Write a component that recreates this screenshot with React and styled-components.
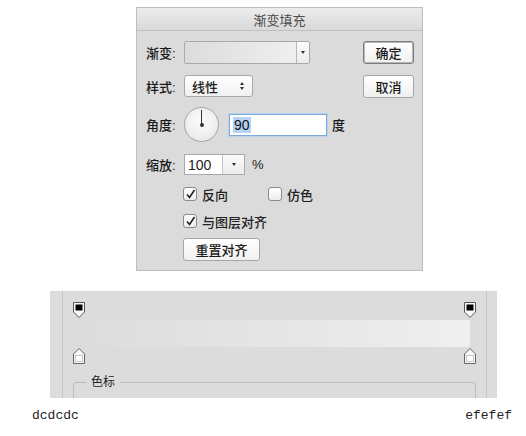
import React from "react";
import styled, { createGlobalStyle } from "styled-components";

const GlobalStyle = createGlobalStyle`
  html, body {
    margin: 0;
    padding: 0;
    background: #fff;
  }
  body {
    font-family: "Noto Sans CJK SC", "Liberation Sans", sans-serif;
    color: #222;
  }
`;

const CJK = `"Liberation Sans", "Noto Sans CJK SC", sans-serif`;

// 위쪽 다이얼로그
const Page = styled.div`
  width: 526px;
  height: 436px;
  overflow: hidden;
  display: flex;
  flex-direction: column;
`;

const Dialog = styled.div`
  box-sizing: border-box;
  width: 287px;
  height: 264px;
  margin: 7px 0 0 136px;
  border: 1px solid #bdbdbd;
  background: #dbdbdb;
  display: flex;
  flex-direction: column;
`;

const TitleBar = styled.div`
  height: 22px;
  border-bottom: 1px solid #c2c2c2;
  background: linear-gradient(#ececec, #d9d9d9);
  display: flex;
  align-items: center;
  justify-content: center;
  font-size: 13px;
  color: #4a4a4a;
  font-family: ${CJK};
`;

const Body = styled.div`
  display: grid;
  grid-template-columns: 1fr 51px;
  padding: 0 8px 0 9px;
`;

const Main = styled.div`
  display: flex;
  flex-direction: column;
`;

const Row = styled.div`
  display: flex;
  align-items: center;
  height: ${(p) => p.h}px;
  margin-top: ${(p) => p.mt}px;
  padding-left: ${(p) => p.indent || 0}px;
`;

const Label = styled.span`
  width: 38px;
  flex: none;
  font-size: 13px;
  font-weight: 500;
  font-family: ${CJK};
  color: #1a1a1a;
`;

const Text = styled.span`
  font-size: 13px;
  font-weight: 500;
  font-family: ${CJK};
  color: #1a1a1a;
  margin-left: ${(p) => p.ml || 0}px;
`;

const GradientPick = styled.div`
  box-sizing: border-box;
  width: 126px;
  height: 23px;
  border: 1px solid #a9a9a9;
  border-radius: 2px;
  display: flex;
  background: #fff;
`;

const GradientSwatch = styled.div`
  flex: 1;
  background: linear-gradient(90deg, #dcdcdc, #efefef);
  border-right: 1px solid #b5b5b5;
`;

const DropPart = styled.div`
  width: ${(p) => p.w}px;
  display: flex;
  align-items: center;
  justify-content: center;
  background: linear-gradient(#fbfbfb, #ececec);
`;

const Arrow = styled.span`
  width: 0;
  height: 0;
  border-left: 2.5px solid transparent;
  border-right: 2.5px solid transparent;
  border-top: ${(p) => (p.up ? "none" : "3px solid #333")};
  border-bottom: ${(p) => (p.up ? "3px solid #333" : "none")};
`;

const SelectBox = styled.div`
  box-sizing: border-box;
  width: 69px;
  height: 22px;
  border: 1px solid #a9a9a9;
  border-radius: 3px;
  background: linear-gradient(#ffffff, #f1f1f1);
  display: flex;
  align-items: center;
  justify-content: space-between;
  padding: 0 8px 0 7px;
  font-size: 13px;
  font-weight: 500;
  font-family: ${CJK};
`;

const Updown = styled.span`
  display: flex;
  flex-direction: column;
  gap: 2px;
`;

const Dial = styled.div`
  position: relative;
  box-sizing: border-box;
  width: 35px;
  height: 35px;
  border-radius: 50%;
  border: 1px solid #a4a4a4;
  background: radial-gradient(circle at 50% 40%, #fdfdfd, #e4e4e4);
  flex: none;
`;

const DialHand = styled.div`
  position: absolute;
  left: 16px;
  top: 2px;
  width: 1px;
  height: 15px;
  background: #333;
  &::after {
    content: "";
    position: absolute;
    left: -1.5px;
    bottom: -2px;
    width: 4px;
    height: 4px;
    border-radius: 50%;
    background: #333;
  }
`;

const AngleInput = styled.div`
  box-sizing: border-box;
  width: 98px;
  height: 22px;
  margin-left: 10px;
  border: 1px solid #7ea8d6;
  box-shadow: 0 0 0 1px #b9d2ee;
  background: #fff;
  display: flex;
  align-items: center;
  padding-left: 3px;
  font-family: "Liberation Sans", sans-serif;
  font-size: 14px;
  color: #111;
`;

const Selected = styled.span`
  background: #b5d3f7;
  padding: 0 1px;
`;

const ScaleInput = styled.div`
  box-sizing: border-box;
  width: 61px;
  height: 21px;
  border: 1px solid #a9a9a9;
  background: #fff;
  display: flex;
  font-family: "Liberation Sans", sans-serif;
  font-size: 14px;
`;

const ScaleValue = styled.div`
  flex: 1;
  display: flex;
  align-items: center;
  padding-left: 3px;
  border-right: 1px solid #c4c4c4;
`;

const Check = styled.span`
  box-sizing: border-box;
  width: 14px;
  height: 14px;
  border: 1px solid #8a8a8a;
  border-radius: 3px;
  background: linear-gradient(#ffffff, #ededed);
  display: flex;
  align-items: center;
  justify-content: center;
  flex: none;
`;

const CheckItem = styled.label`
  display: flex;
  align-items: center;
  gap: 5px;
  width: ${(p) => (p.w ? `${p.w}px` : "auto")};
  font-size: 13px;
  font-weight: 500;
  font-family: ${CJK};
`;

const Button = styled.div`
  box-sizing: border-box;
  width: ${(p) => p.w || 51}px;
  height: 23px;
  border: 1px solid ${(p) => (p.primary ? "#7d7d7d" : "#a6a6a6")};
  box-shadow: ${(p) => (p.primary ? "inset 0 0 0 1px #b8b8b8" : "none")};
  border-radius: 3px;
  background: linear-gradient(#ffffff, #f0f0f0);
  display: flex;
  align-items: center;
  justify-content: center;
  font-size: 13px;
  font-weight: 500;
  font-family: ${CJK};
  color: #1a1a1a;
`;

const Buttons = styled.div`
  display: flex;
  flex-direction: column;
  gap: 11px;
  margin-top: 10px;
`;

// 아래쪽 색상 바
const Strip = styled.div`
  box-sizing: border-box;
  width: 447px;
  height: 107px;
  margin: 20px 0 0 50px;
  background: #dcdcdc;
  padding: 0 10px 0 12px;
  overflow: hidden;
`;

const StripInner = styled.div`
  height: 100%;
  border-left: 1px solid #c6c6c6;
  border-right: 1px solid #c6c6c6;
  padding: 11px 10px 0 10px;
`;

const StopRow = styled.div`
  display: flex;
  justify-content: space-between;
  height: 16px;
  margin-top: ${(p) => p.mt || 0}px;
`;

const Bar = styled.div`
  height: 27px;
  margin: 2px 6px 0 6px;
  background: linear-gradient(90deg, #dcdcdc, #efefef);
`;

const GroupBox = styled.div`
  position: relative;
  margin-top: 18px;
  height: 40px;
  border: 1px solid #bcbcbc;
  border-radius: 3px;
`;

const Legend = styled.span`
  position: absolute;
  top: -9px;
  left: 12px;
  padding: 0 5px;
  background: #dcdcdc;
  font-size: 12px;
  line-height: 16px;
  font-family: ${CJK};
  color: #222;
`;

const HexRow = styled.div`
  display: flex;
  justify-content: space-between;
  padding: 0 14px 0 32px;
  margin-top: 10px;
  font-family: "Liberation Mono", monospace;
  font-size: 13px;
  line-height: 16px;
  color: #222;
`;

const TopStop = () => (
  <svg width="12" height="16" viewBox="0 0 12 16">
    <path d="M0.5 0.5H11.5V10L6 15.5L0.5 10Z" fill="#fafafa" stroke="#555" />
    <rect x="2.5" y="2.5" width="7" height="6" fill="#000" />
  </svg>
);

const BottomStop = () => (
  <svg width="12" height="16" viewBox="0 0 12 16">
    <path d="M6 0.5L11.5 6V15.5H0.5V6Z" fill="#f6f6f6" stroke="#666" />
    <rect x="2.5" y="7.5" width="7" height="6" fill="#fdfdfd" stroke="#bbb" strokeWidth="0.8" />
  </svg>
);

const Tick = () => (
  <svg width="11" height="11" viewBox="0 0 11 11">
    <path d="M2 5.5L4.5 8.5L9.5 1" fill="none" stroke="#222" strokeWidth="1.6" />
  </svg>
);

const App = () => {
  return (
    <Page>
      <GlobalStyle />
      <Dialog>
        <TitleBar>渐变填充</TitleBar>
        <Body>
          <Main>
            <Row h={23} mt={10}>
              <Label>渐变:</Label>
              <GradientPick>
                <GradientSwatch />
                <DropPart w={12}>
                  <Arrow />
                </DropPart>
              </GradientPick>
            </Row>
            <Row h={22} mt={11}>
              <Label>样式:</Label>
              <SelectBox>
                <span>线性</span>
                <Updown>
                  <Arrow up />
                  <Arrow />
                </Updown>
              </SelectBox>
            </Row>
            <Row h={35} mt={10}>
              <Label>角度:</Label>
              <Dial>
                <DialHand />
              </Dial>
              <AngleInput>
                <Selected>90</Selected>
              </AngleInput>
              <Text ml={5}>度</Text>
            </Row>
            <Row h={21} mt={12}>
              <Label>缩放:</Label>
              <ScaleInput>
                <ScaleValue>100</ScaleValue>
                <DropPart w={21}>
                  <Arrow />
                </DropPart>
              </ScaleInput>
              <Text ml={7}>%</Text>
            </Row>
            <Row h={14} mt={12} indent={37}>
              <CheckItem w={85}>
                <Check>
                  <Tick />
                </Check>
                反向
              </CheckItem>
              <CheckItem>
                <Check />
                仿色
              </CheckItem>
            </Row>
            <Row h={14} mt={13} indent={37}>
              <CheckItem>
                <Check>
                  <Tick />
                </Check>
                与图层对齐
              </CheckItem>
            </Row>
            <Row h={22} mt={10} indent={37}>
              <Button w={77}>重置对齐</Button>
            </Row>
          </Main>
          <Buttons>
            <Button primary>确定</Button>
            <Button>取消</Button>
          </Buttons>
        </Body>
      </Dialog>

      <Strip>
        <StripInner>
          <StopRow>
            <TopStop />
            <TopStop />
          </StopRow>
          <Bar />
          <StopRow mt={1}>
            <BottomStop />
            <BottomStop />
          </StopRow>
          <GroupBox>
            <Legend>色标</Legend>
          </GroupBox>
        </StripInner>
      </Strip>

      <HexRow>
        <span>dcdcdc</span>
        <span>efefef</span>
      </HexRow>
    </Page>
  );
};

export default App;
